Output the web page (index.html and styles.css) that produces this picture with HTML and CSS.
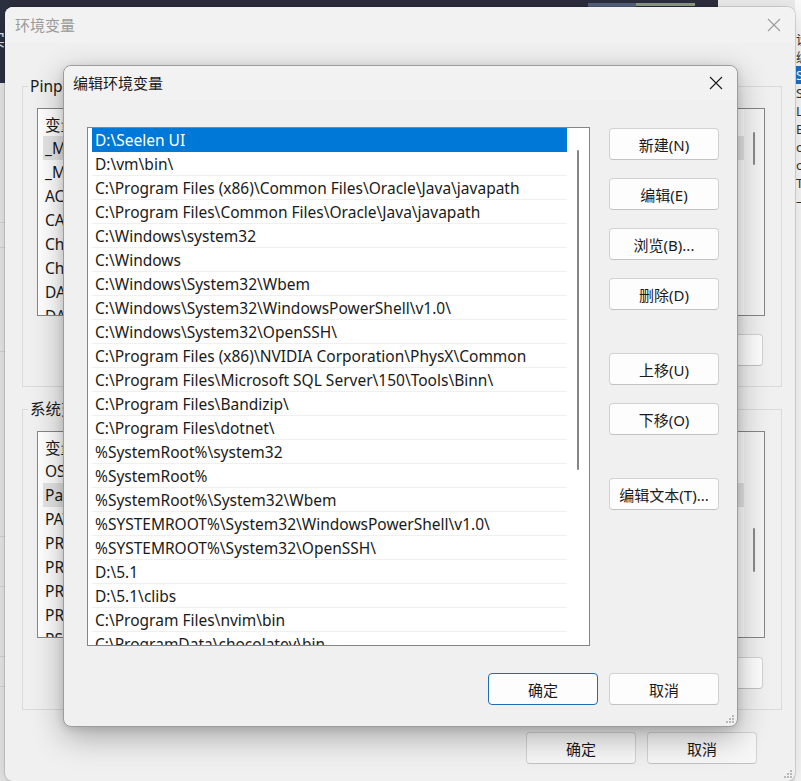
FILE: index.html
```html
<!DOCTYPE html>
<html lang="zh-CN">
<head>
<meta charset="utf-8">
<title>编辑环境变量</title>
<link rel="stylesheet" href="styles.css">
</head>
<body>
<div class="desktop">
  <div class="bg-top">
    <div class="bg-top-chip"><div class="bg-top-tabs"></div></div>
  </div>
  <div class="bg-left">
    <div class="bg-left-dark"><span class="bg-left-glyph">实</span></div>
    <div class="bg-left-cell h140"></div>
    <div class="bg-left-cell h25"></div>
    <div class="bg-left-cell h104"></div>
    <div class="bg-left-cell h185"></div>
    <div class="bg-left-cell h50"></div>
    <div class="bg-left-cell h70"></div>
    <div class="bg-left-cell h30"></div>
  </div>
  <div class="bg-right">
    <div class="bg-right-line">设置</div>
    <div class="bg-right-line">编辑</div>
    <div class="bg-right-line sel">Se</div>
    <div class="bg-right-line">Sh</div>
    <div class="bg-right-line">Li</div>
    <div class="bg-right-line">Bo</div>
    <div class="bg-right-line">od</div>
    <div class="bg-right-line">oc</div>
    <div class="bg-right-line">Tx</div>
    <div class="bg-right-line">—</div>
  </div>

  <section class="win outer">
    <header class="titlebar">
      <span class="title inactive">环境变量</span>
      <svg class="close close-outer" width="14" height="14" viewBox="0 0 14 14"><path d="M1 1L13 13M13 1L1 13" /></svg>
    </header>
    <div class="outer-body">
      <div class="group">
        <span class="legend">Pinpointer 的用户变量(U)</span>
        <div class="vlist">
          <div class="vrows">
            <div class="vhead">变量</div>
            <div class="vrow sel">_MSYS</div>
            <div class="vrow">_MINGW</div>
            <div class="vrow">ACSetup</div>
            <div class="vrow">CARGO</div>
            <div class="vrow">ChocoInst</div>
            <div class="vrow">ChocoLast</div>
            <div class="vrow">DATA</div>
            <div class="vrow">DAEMON</div>
          </div>
          <div class="vscroll"><div class="vthumb t1"></div></div>
        </div>
        <div class="group-actions">
          <button class="btn">删除(D)</button>
        </div>
      </div>

      <div class="group g2">
        <span class="legend">系统变量(S)</span>
        <div class="vlist l2">
          <div class="vrows">
            <div class="vhead">变量</div>
            <div class="vrow">OS</div>
            <div class="vrow sel">Path</div>
            <div class="vrow">PATHEXT</div>
            <div class="vrow">PROC_ARCH</div>
            <div class="vrow">PROC_ID</div>
            <div class="vrow">PROC_LEVEL</div>
            <div class="vrow">PROC_REV</div>
            <div class="vrow">PSModule</div>
          </div>
          <div class="vscroll"><div class="vthumb t2"></div></div>
        </div>
        <div class="group-actions ga2">
          <button class="btn">删除(L)</button>
        </div>
      </div>

      <div class="dialog-actions outer-actions">
        <button class="btn">确定</button>
        <button class="btn">取消</button>
      </div>
    </div>
    <svg class="grip grip-outer" width="10" height="10" viewBox="0 0 10 10"><rect x="7" y="1" width="2" height="2"/><rect x="4" y="4" width="2" height="2"/><rect x="7" y="4" width="2" height="2"/><rect x="1" y="7" width="2" height="2"/><rect x="4" y="7" width="2" height="2"/><rect x="7" y="7" width="2" height="2"/></svg>
  </section>

  <section class="win inner">
    <header class="titlebar inner-titlebar">
      <span class="title">编辑环境变量</span>
      <svg class="close close-inner" width="14" height="14" viewBox="0 0 14 14"><path d="M1 1L13 13M13 1L1 13" /></svg>
    </header>
    <div class="inner-body">
      <div class="pathlist">
        <div class="prows">
          <div class="prow sel">D:\Seelen UI</div>
          <div class="prow">D:\vm\bin\</div>
          <div class="prow">C:\Program Files (x86)\Common Files\Oracle\Java\javapath</div>
          <div class="prow">C:\Program Files\Common Files\Oracle\Java\javapath</div>
          <div class="prow">C:\Windows\system32</div>
          <div class="prow">C:\Windows</div>
          <div class="prow">C:\Windows\System32\Wbem</div>
          <div class="prow">C:\Windows\System32\WindowsPowerShell\v1.0\</div>
          <div class="prow">C:\Windows\System32\OpenSSH\</div>
          <div class="prow">C:\Program Files (x86)\NVIDIA Corporation\PhysX\Common</div>
          <div class="prow">C:\Program Files\Microsoft SQL Server\150\Tools\Binn\</div>
          <div class="prow">C:\Program Files\Bandizip\</div>
          <div class="prow">C:\Program Files\dotnet\</div>
          <div class="prow">%SystemRoot%\system32</div>
          <div class="prow">%SystemRoot%</div>
          <div class="prow">%SystemRoot%\System32\Wbem</div>
          <div class="prow">%SYSTEMROOT%\System32\WindowsPowerShell\v1.0\</div>
          <div class="prow">%SYSTEMROOT%\System32\OpenSSH\</div>
          <div class="prow">D:\5.1</div>
          <div class="prow">D:\5.1\clibs</div>
          <div class="prow">C:\Program Files\nvim\bin</div>
          <div class="prow">C:\ProgramData\chocolatey\bin</div>
        </div>
        <div class="pscroll"><div class="pthumb"></div></div>
      </div>
      <div class="side-actions">
        <button class="btn">新建(N)</button>
        <button class="btn">编辑(E)</button>
        <button class="btn">浏览(B)...</button>
        <button class="btn">删除(D)</button>
        <button class="btn gap-lg">上移(U)</button>
        <button class="btn">下移(O)</button>
        <button class="btn gap-lg">编辑文本(T)...</button>
      </div>
    </div>
    <div class="dialog-actions inner-actions">
      <button class="btn primary">确定</button>
      <button class="btn">取消</button>
    </div>
    <svg class="grip grip-inner" width="10" height="10" viewBox="0 0 10 10"><rect x="7" y="1" width="2" height="2"/><rect x="4" y="4" width="2" height="2"/><rect x="7" y="4" width="2" height="2"/><rect x="1" y="7" width="2" height="2"/><rect x="4" y="7" width="2" height="2"/><rect x="7" y="7" width="2" height="2"/></svg>
  </section>
</div>
</body>
</html>
```

FILE: styles.css
```css
* { box-sizing: border-box; }

html, body {
  margin: 0;
  padding: 0;
}

body {
  width: 801px;
  height: 781px;
  overflow: hidden;
  background: #ececec;
  font-family: "Noto Sans", "Noto Sans CJK SC", sans-serif;
  font-size: 15px;
  color: #1a1a1a;
}

.desktop {
  position: relative;
  width: 801px;
  height: 781px;
  overflow: hidden;
  background: #ececec;
}

/* ---------- background apps ---------- */
.bg-top {
  position: absolute;
  left: 0;
  top: 0;
  width: 718px;
  height: 12px;
  background: #2c2e3d;
}
.bg-top-chip {
  margin-left: 588px;
  width: 107px;
  height: 3px;
  background: #8c9a7c;
}
.bg-top-tabs {
  margin-top: 3px;
  width: 48px;
  height: 6px;
  background: #56607a;
}

.bg-left {
  position: absolute;
  left: 0;
  top: 0;
  width: 8px;
  height: 781px;
  display: flex;
  flex-direction: column;
  background: #e9e9e9;
}
.bg-left-dark {
  height: 83px;
  background: #2c3142;
  padding-top: 30px;
  overflow: hidden;
}
.bg-left-glyph {
  display: block;
  margin-left: -12px;
  color: #dfe6f0;
  font-size: 17px;
  line-height: 20px;
}
.bg-left-cell { border-bottom: 1px solid #d6d6d6; }
.h140 { height: 140px; }
.h25 { height: 25px; }
.h104 { height: 104px; }
.h185 { height: 185px; }
.h50 { height: 50px; }
.h70 { height: 70px; }
.h30 { height: 30px; }

.bg-right {
  position: absolute;
  left: 795px;
  top: 0;
  width: 6px;
  height: 781px;
  background: #fbfbfb;
  padding-top: 30px;
  overflow: hidden;
  font-size: 13px;
  line-height: 18px;
  color: #333;
}
.bg-right-line {
  margin-left: 1px;
  white-space: nowrap;
  height: 18px;
}
.bg-right-line.sel {
  background: #1a73c9;
  color: #fff;
}

/* ---------- windows ---------- */
.win {
  position: absolute;
  background: #f0f0f0;
  border-radius: 8px;
}

.outer {
  left: 5px;
  top: 7px;
  width: 790px;
  height: 774px;
  box-shadow: 0 0 0 1px rgba(0, 0, 0, 0.12), 0 6px 24px rgba(0, 0, 0, 0.18);
  background: #f0f0f0;
}

.inner {
  left: 63px;
  top: 65px;
  width: 675px;
  height: 662px;
  border: 1px solid #9c9c9c;
  box-shadow: 0 10px 32px rgba(0, 0, 0, 0.30), 0 2px 8px rgba(0, 0, 0, 0.12);
  background: #f0f0f0;
}

.titlebar {
  height: 36px;
  display: flex;
  align-items: center;
  justify-content: space-between;
  padding: 0 14px 0 10px;
  background: #f2f2f2;
  border-radius: 8px 8px 0 0;
}
.inner-titlebar {
  height: 34px;
  padding: 0 14px 0 9px;
}
.title {
  font-size: 15px;
  line-height: 20px;
}
.title.inactive { color: #9a9a9a; }

.close { fill: none; stroke-width: 1.1; }
.close-outer { stroke: #9c9c9c; }
.close-inner { stroke: #1a1a1a; }

.grip {
  position: absolute;
  fill: #b9b9b9;
}
.grip-inner { right: 2px; bottom: 2px; }
.grip-outer { right: 2px; bottom: 2px; }

/* ---------- buttons ---------- */
.btn {
  width: 110px;
  height: 32px;
  padding: 0;
  font-family: inherit;
  font-size: 15px;
  color: #1a1a1a;
  background: #fdfdfd;
  border: 1px solid #d2d2d2;
  border-bottom-color: #c2c2c2;
  border-radius: 4px;
}
.btn.primary {
  border: 1px solid #1e6cb8;
}

.dialog-actions {
  display: flex;
  justify-content: flex-end;
  gap: 11px;
}

/* ---------- outer dialog body ---------- */
.outer-body {
  padding: 0 13px 0 17px;
  display: flex;
  flex-direction: column;
}
.group {
  margin-top: 43px;
  border: 1px solid #dadada;
  padding: 0 16px 20px 14px;
  display: flex;
  flex-direction: column;
}
.group.g2 { margin-top: 22px; }
.legend {
  align-self: flex-start;
  margin: -11px 0 0 -9px;
  padding: 0 2px;
  height: 20px;
  line-height: 20px;
  background: #f0f0f0;
  white-space: nowrap;
  font-size: 15.5px;
}
.vlist {
  margin-top: 12px;
  height: 208px;
  border: 1px solid #868686;
  background: #fff;
  display: flex;
}
.vlist.l2 { height: 207px; }
.vrows {
  flex: 1;
  padding: 4px 0 0 5px;
  overflow: hidden;
  font-size: 15.5px;
}
.vhead, .vrow {
  height: 24px;
  line-height: 24px;
  padding-left: 2px;
  white-space: nowrap;
}
.vhead { height: 23px; }
.vrow.sel { background: #e5e5e5; }
.vscroll {
  width: 20px;
  background: #f4f4f4;
  padding-left: 9px;
}
.vthumb {
  width: 2px;
  background: #8a8a8a;
  border-radius: 1px;
}
.t1 { margin-top: 23px; height: 33px; }
.t2 { margin-top: 96px; height: 44px; }

.group-actions {
  margin-top: 18px;
  padding-right: 2px;
  display: flex;
  justify-content: flex-end;
  gap: 11px;
}
.group-actions.ga2 { margin-top: 19px; }

.outer-actions {
  margin-top: 22px;
  padding-right: 25px;
}
.outer-actions .btn { background: #f7f7f7; }

/* ---------- inner dialog body ---------- */
.inner-body {
  padding: 27px 18px 0 23px;
  display: grid;
  grid-template-columns: 503px 110px;
  column-gap: 19px;
  align-items: start;
}
.pathlist {
  height: 519px;
  border: 1px solid #848484;
  background: #fff;
  display: flex;
  padding-left: 4px;
}
.prows {
  width: 475px;
  overflow: hidden;
  font-size: 15.5px;
}
.prow {
  height: 24px;
  padding-top: 2px;
  line-height: 21px;
  padding-left: 3px;
  border-bottom: 1px solid #f0f0f0;
  white-space: nowrap;
}
.prow.sel {
  background: #0078d7;
  color: #fff;
  border-bottom-color: #0078d7;
}
.pscroll {
  width: 22px;
  padding: 22px 0 0 10px;
}
.pthumb {
  width: 2px;
  height: 320px;
  background: #868686;
  border-radius: 1px;
}
.side-actions {
  margin-top: 1px;
  display: flex;
  flex-direction: column;
  gap: 18px;
}
.side-actions .gap-lg { margin-top: 25px; }

.inner-actions {
  margin-top: 27px;
  padding-right: 18px;
}
```
